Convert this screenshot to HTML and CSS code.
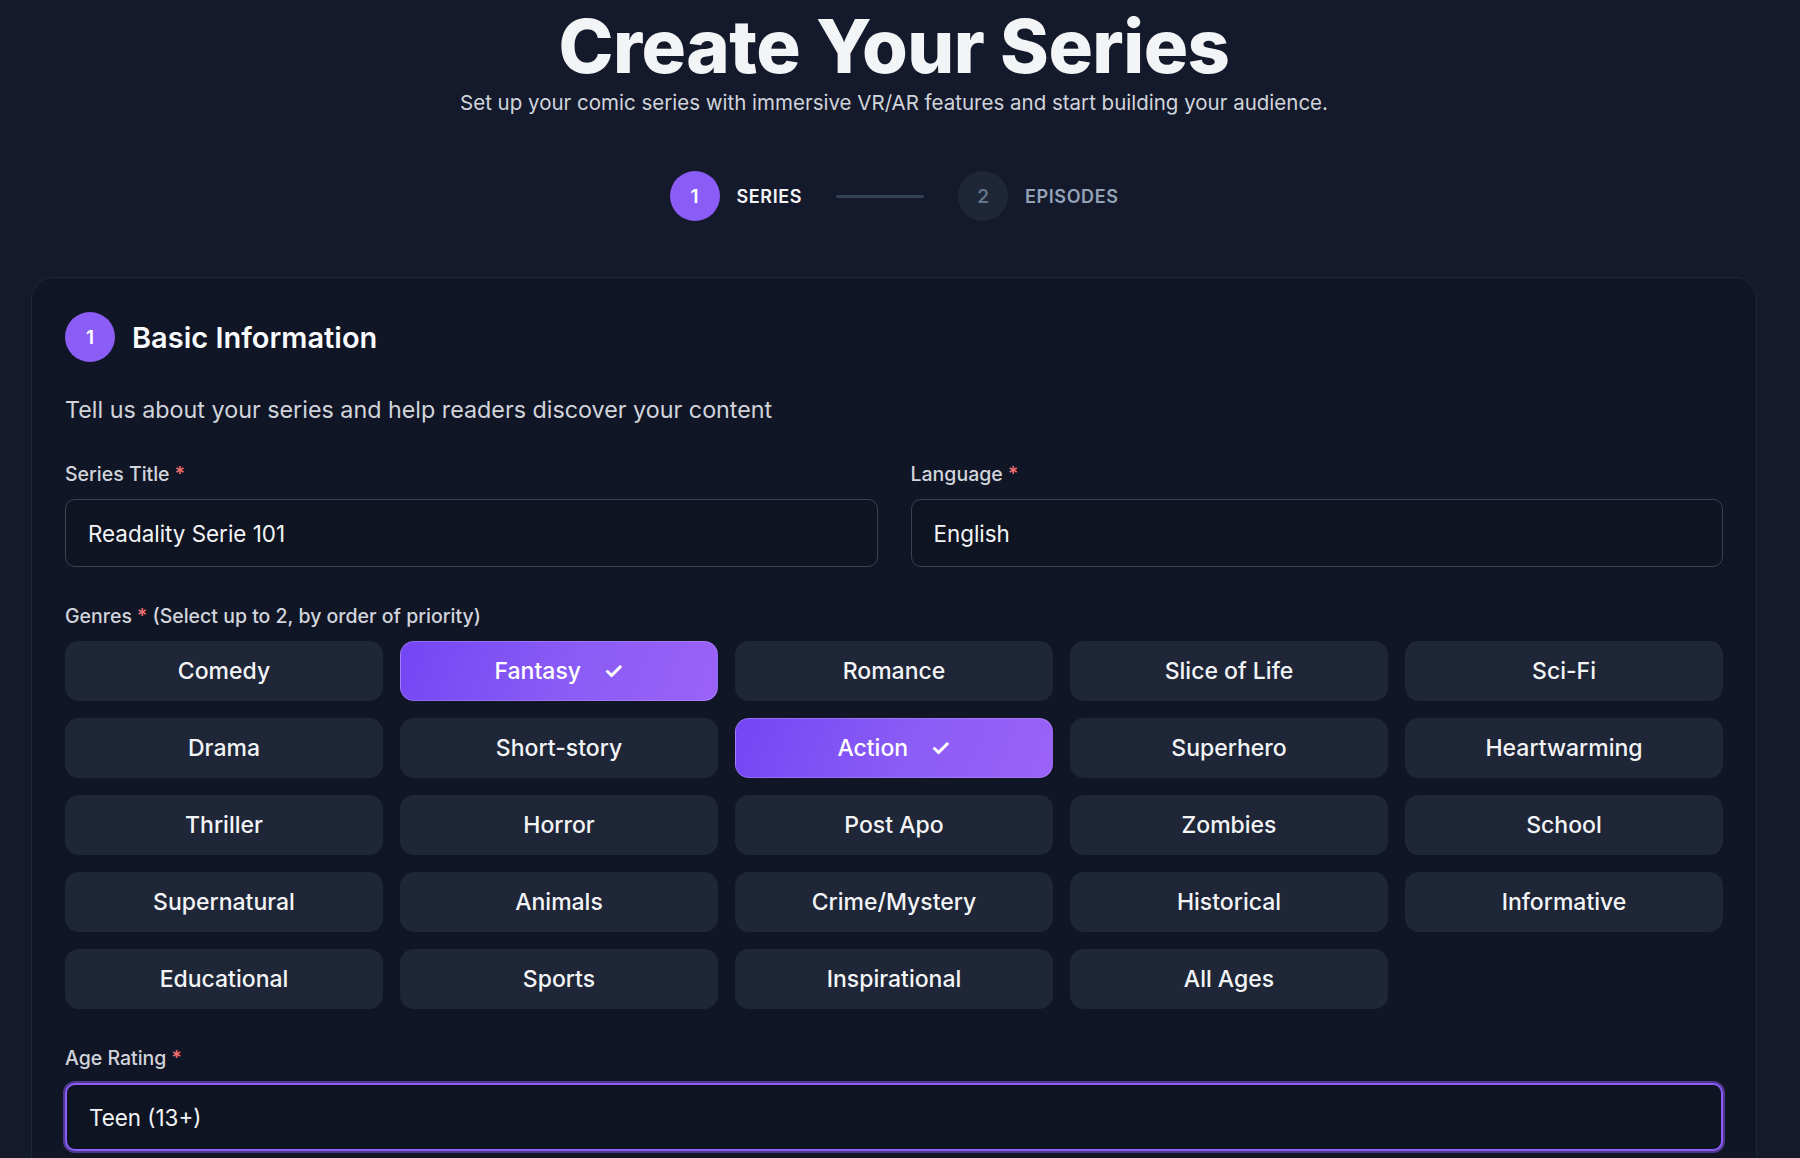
FILE: index.html
```html
<!DOCTYPE html>
<html lang="en">
<head>
  <meta charset="UTF-8">
  <meta name="viewport" content="width=device-width, initial-scale=1.0">
  <title>Create Your Series</title>
  <link rel="stylesheet" href="styles.css">
</head>
<body>
  <main class="page">
    <header class="hero">
      <h1>Create Your Series</h1>
      <p class="subtitle">Set up your comic series with immersive VR/AR features and start building your audience.</p>
    </header>

    <nav class="stepper">
      <div class="step active">
        <span class="step-num">1</span>
        <span class="step-label">SERIES</span>
      </div>
      <span class="step-line"></span>
      <div class="step">
        <span class="step-num">2</span>
        <span class="step-label">EPISODES</span>
      </div>
    </nav>

    <section class="card">
      <div class="card-head">
        <span class="badge">1</span>
        <h2>Basic Information</h2>
      </div>
      <p class="card-desc">Tell us about your series and help readers discover your content</p>

      <div class="field-row">
        <div class="field">
          <label for="title">Series Title <span class="req">*</span></label>
          <input id="title" class="input" type="text" value="Readality Serie 101">
        </div>
        <div class="field">
          <label for="language">Language <span class="req">*</span></label>
          <input id="language" class="input" type="text" value="English">
        </div>
      </div>

      <div class="field">
        <label>Genres <span class="req">*</span> (Select up to 2, by order of priority)</label>
        <div class="genres">
          <button class="genre">Comedy</button>
          <button class="genre selected">Fantasy <span class="check">✓</span></button>
          <button class="genre">Romance</button>
          <button class="genre">Slice of Life</button>
          <button class="genre">Sci-Fi</button>
          <button class="genre">Drama</button>
          <button class="genre">Short-story</button>
          <button class="genre selected">Action <span class="check">✓</span></button>
          <button class="genre">Superhero</button>
          <button class="genre">Heartwarming</button>
          <button class="genre">Thriller</button>
          <button class="genre">Horror</button>
          <button class="genre">Post Apo</button>
          <button class="genre">Zombies</button>
          <button class="genre">School</button>
          <button class="genre">Supernatural</button>
          <button class="genre">Animals</button>
          <button class="genre">Crime/Mystery</button>
          <button class="genre">Historical</button>
          <button class="genre">Informative</button>
          <button class="genre">Educational</button>
          <button class="genre">Sports</button>
          <button class="genre">Inspirational</button>
          <button class="genre">All Ages</button>
        </div>
      </div>

      <div class="field">
        <label for="age">Age Rating <span class="req">*</span></label>
        <input id="age" class="input focused" type="text" value="Teen (13+)">
      </div>
    </section>
  </main>
</body>
</html>
```

FILE: styles.css
```css
* {
  box-sizing: border-box;
}

body {
  margin: 0;
  background-color: #141a2c;
  color: #f3f4f6;
  font-family: Inter, "Open Sans", sans-serif;
  overflow: hidden;
}

.page {
  padding: 0 43px 0 31px;
}

.hero {
  text-align: center;
  padding-top: 3px;
}

.hero h1 {
  margin: 0;
  font-size: 74px;
  font-weight: 800;
  line-height: 86px;
  letter-spacing: -0.5px;
  color: #f3f4f6;
}

.subtitle {
  margin: 0;
  font-size: 20.5px;
  line-height: 28px;
  color: #d1d5db;
}

.stepper {
  display: flex;
  justify-content: center;
  align-items: center;
  gap: 34px;
  margin-top: 54px;
  margin-bottom: 56px;
}

.step {
  display: flex;
  align-items: center;
  gap: 17px;
}

.step-num {
  width: 50px;
  height: 50px;
  border-radius: 50%;
  display: flex;
  align-items: center;
  justify-content: center;
  font-size: 19px;
  font-weight: 600;
  background-color: #1e2638;
  color: #64748b;
}

.step-label {
  font-size: 18px;
  font-weight: 600;
  letter-spacing: 0.6px;
  color: #94a3b8;
}

.step.active .step-num {
  background-color: #8b5cf6;
  color: #fff;
}

.step.active .step-label {
  color: #f3f4f6;
}

.step-line {
  width: 88px;
  height: 3px;
  border-radius: 2px;
  background-color: #334155;
}

.card {
  background-color: #111627;
  border: 1px solid #1f2638;
  border-radius: 22px;
  padding: 34px 33px 40px;
}

.card-head {
  display: flex;
  align-items: center;
  gap: 17px;
}

.badge {
  width: 50px;
  height: 50px;
  border-radius: 50%;
  background-color: #8b5cf6;
  color: #fff;
  display: flex;
  align-items: center;
  justify-content: center;
  font-size: 19px;
  font-weight: 600;
}

.card-head h2 {
  margin: 0;
  font-size: 29px;
  font-weight: 600;
  color: #f9fafb;
}

.card-desc {
  margin: 33px 0 37px;
  font-size: 23.3px;
  line-height: 30px;
  color: #d1d5db;
}

.field-row {
  display: grid;
  grid-template-columns: 1fr 1fr;
  gap: 33px;
}

.field {
  display: flex;
  flex-direction: column;
  gap: 13px;
  margin-bottom: 37px;
}

.field label {
  font-size: 19.5px;
  line-height: 24px;
  font-weight: 500;
  color: #d1d5db;
}

.req {
  color: #f87171;
}

.input {
  height: 68px;
  padding: 0 22px;
  border: 1.5px solid #3b4252;
  border-radius: 10px;
  background-color: #0f1422;
  color: #f3f4f6;
  font-family: inherit;
  font-size: 22.4px;
  outline: none;
}

.input.focused {
  border: 2px solid #8b5cf6;
  box-shadow: 0 0 0 2px rgba(139, 92, 246, 0.5);
}

.genres {
  display: grid;
  grid-template-columns: repeat(5, 1fr);
  gap: 17px;
}

.genre {
  height: 60px;
  border: 1px solid transparent;
  border-radius: 14px;
  background-color: #1e2638;
  color: #f3f4f6;
  font-family: inherit;
  font-size: 23px;
  font-weight: 500;
  cursor: pointer;
}

.genre.selected {
  background: linear-gradient(110deg, #7446f4 0%, #8b5cf6 55%, #9b62f6 100%);
  border-color: rgba(196, 170, 255, 0.35);
  color: #fff;
}

.check {
  margin-left: 16px;
  font-weight: 600;
}
```
